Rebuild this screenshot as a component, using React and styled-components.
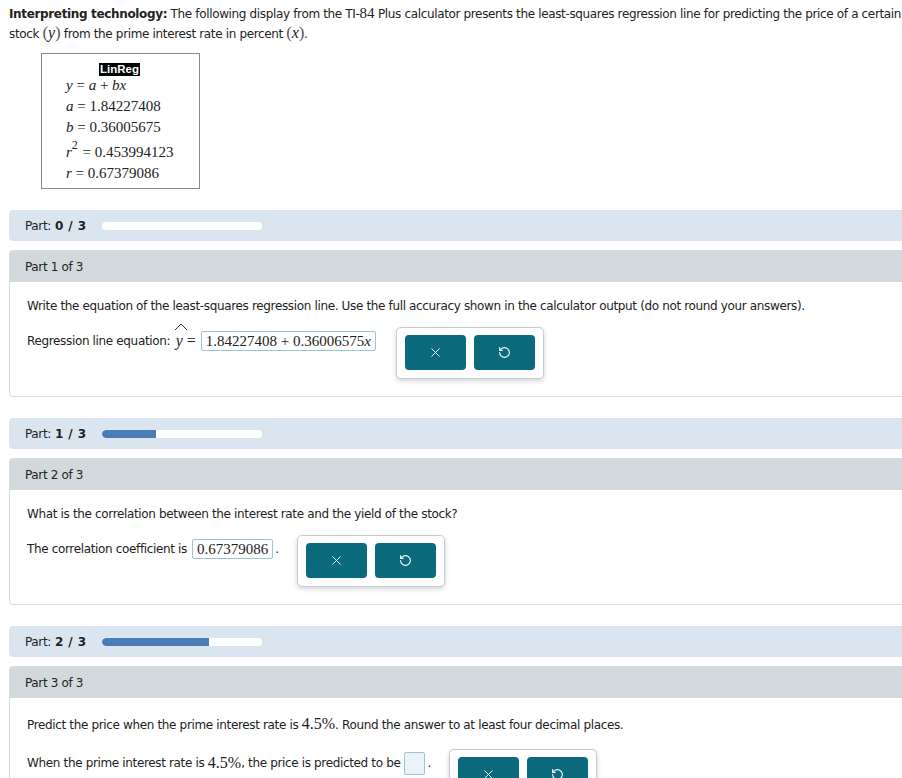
import React from "react";
import styled, { createGlobalStyle } from "styled-components";
import { X, RotateCcw } from "lucide-react";

const Global = createGlobalStyle`
  html, body { margin: 0; padding: 0; overflow: hidden; background: #fff; }
  body { font-family: "DejaVu Sans", Verdana, sans-serif; font-size: 12px; letter-spacing: -0.35px; color: #222; }
`;

const Page = styled.div`
  width: 930px;
  padding: 4px 0 0 9px;
`;

const Intro = styled.p`
  margin: 0;
  line-height: 20px;
  width: 895px;
`;

const M = styled.span`
  font-family: "Liberation Serif", "Times New Roman", serif;
  font-style: ${(p) => (p.$up ? "normal" : "italic")};
  font-size: ${(p) => p.$size || 16}px;
  letter-spacing: 0;
  line-height: 1;
`;

const Paren = styled.span`
  font-family: "Liberation Serif", serif;
  font-size: 17px;
  line-height: 1;
  color: #555;
`;

const CalcBox = styled.div`
  margin: 9px 0 0 32px;
  width: 157px;
  height: 125px;
  border: 1px solid #8a8a8a;
  display: flex;
  flex-direction: column;
  padding-top: 9px;
  letter-spacing: 0;
`;

const LinLabel = styled.div`
  align-self: center;
  background: #000;
  color: #fff;
  font-family: "Liberation Sans", Arial, sans-serif;
  font-weight: bold;
  font-size: 11.5px;
  line-height: 13px;
  padding: 0 1px;
  margin-left: -2px;
`;

const CalcLine = styled.div`
  font-family: "Liberation Serif", "Times New Roman", serif;
  font-size: 15px;
  padding-left: 24px;
  height: ${(p) => p.$h || 21}px;
  display: flex;
  align-items: flex-end;
  white-space: pre;
  i { font-style: italic; }
  sup { font-size: 12px; position: relative; top: -8px; vertical-align: baseline; margin-right: 1px; }
`;

const StatusBar = styled.div`
  margin-top: 21px;
  height: 31px;
  background: #dbe5ef;
  border-radius: 4px 0 0 4px;
  display: flex;
  align-items: center;
  padding-left: 16px;
  b { margin-left: 4px; white-space: pre; letter-spacing: 0.4px; }
`;

const Track = styled.div`
  margin-left: 16px;
  width: 160px;
  height: 8px;
  border-radius: 4px;
  background: #fff;
  overflow: hidden;
`;

const Fill = styled.div`
  height: 100%;
  background: #4a7cb5;
  border-radius: 4px 0 0 4px;
`;

const PartBox = styled.div`
  margin-top: 9px;
  border: 1px solid #d5dbde;
  border-right: none;
  border-radius: 4px 0 0 4px;
  overflow: hidden;
`;

const PartHead = styled.div`
  height: 31px;
  background: #d2d9dc;
  display: flex;
  align-items: center;
  padding-left: 15px;
`;

const PartBody = styled.div`
  padding: ${(p) => 14 + (p.$extra || 0)}px 17px 17px;
`;

const Question = styled.div`
  line-height: 20px;
`;

const AnswerRow = styled.div`
  display: flex;
  align-items: flex-start;
  margin-top: ${(p) => p.$mt || 11}px;
`;

const AnswerText = styled.div`
  display: flex;
  align-items: center;
  margin-top: 4px;
  white-space: pre;
  height: 20px;
`;

const Hat = styled.span`
  display: inline-flex;
  flex-direction: column;
  align-items: center;
  margin: 0 4px 0 2px;
  position: relative;
  svg { position: absolute; top: -10px; left: -2px; }
`;

const Input = styled.span`
  display: inline-flex;
  align-items: center;
  height: ${(p) => (p.$empty ? 21 : 18)}px;
  min-width: ${(p) => (p.$empty ? 19 : 0)}px;
  padding: 0 ${(p) => (p.$empty ? 0 : 4)}px;
  border: 1px solid #9dc4d3;
  border-radius: 2px;
  background: ${(p) => (p.$empty ? "#e9f3f8" : "#fff")};
  font-family: "Liberation Serif", "Times New Roman", serif;
  font-size: 15px;
  letter-spacing: 0;
  color: #222;
  margin-left: ${(p) => p.$ml ?? 4}px;
  margin-right: 2px;
`;

const Group = styled.div`
  margin-left: 18px;
  display: flex;
  gap: 8px;
  padding: 7px 8px 8px;
  border: 1px solid #c7ccd0;
  border-radius: 5px;
  box-shadow: 0 2px 5px rgba(0, 0, 0, 0.18);
  background: #fff;
`;

const Btn = styled.button`
  width: 61px;
  height: 35px;
  border: none;
  border-radius: 4px;
  background: #0b6b7c;
  color: #fff;
  display: flex;
  align-items: center;
  justify-content: center;
  padding: 0;
`;

function Buttons() {
  return (
    <Group>
      <Btn aria-label="clear"><X size={15} strokeWidth={1.5} /></Btn>
      <Btn aria-label="undo"><RotateCcw size={13} strokeWidth={2} /></Btn>
    </Group>
  );
}

function Status({ n }) {
  return (
    <StatusBar>
      Part:<b>{n} / 3</b>
      <Track>
        <Fill style={{ width: `${(n / 3) * 100}%` }} />
      </Track>
    </StatusBar>
  );
}

export default function App() {
  return (
    <Page>
      <Global />
      <Intro>
        <b>Interpreting technology:</b> The following display from the TI-<M $up $size={15}>84</M> Plus calculator presents the least-squares regression line for predicting the price of a certain stock <Paren>(</Paren><M>y</M><Paren>)</Paren> from the prime interest rate in percent <Paren>(</Paren><M>x</M><Paren>)</Paren>.
      </Intro>
      <CalcBox>
        <LinLabel>LinReg</LinLabel>
        <CalcLine $h={18}><i>y</i> = <i>a</i> + <i>bx</i></CalcLine>
        <CalcLine><i>a</i> = 1.84227408</CalcLine>
        <CalcLine><i>b</i> = 0.36005675</CalcLine>
        <CalcLine $h={25}><i>r</i><sup>2</sup> = 0.453994123</CalcLine>
        <CalcLine><i>r</i> = 0.67379086</CalcLine>
      </CalcBox>

      <Status n={0} />
      <PartBox>
        <PartHead>Part 1 of 3</PartHead>
        <PartBody>
          <Question>Write the equation of the least-squares regression line. Use the full accuracy shown in the calculator output (do not round your answers).</Question>
          <AnswerRow>
            <AnswerText>
              Regression line equation: <Hat><svg width="14" height="8" viewBox="0 0 14 8"><path d="M1 7 L7 1 L13 7" fill="none" stroke="#333" strokeWidth="1" /></svg><M>y</M></Hat><M $up>=</M>
              <Input $ml={5}>1.84227408 + 0.36006575<M $size={15}>x</M></Input>
            </AnswerText>
            <Buttons />
          </AnswerRow>
        </PartBody>
      </PartBox>

      <Status n={1} />
      <PartBox>
        <PartHead>Part 2 of 3</PartHead>
        <PartBody>
          <Question>What is the correlation between the interest rate and the yield of the stock?</Question>
          <AnswerRow>
            <AnswerText>
              The correlation coefficient is<Input $ml={5}>0.67379086</Input>.
            </AnswerText>
            <Buttons />
          </AnswerRow>
        </PartBody>
      </PartBox>

      <Status n={2} />
      <PartBox>
        <PartHead>Part 3 of 3</PartHead>
        <PartBody $extra={3}>
          <Question>Predict the price when the prime interest rate is <M $up>4.5%</M>. Round the answer to at least four decimal places.</Question>
          <AnswerRow $mt={14}>
            <AnswerText>
              When the prime interest rate is <M $up>4.5%</M>, the price is predicted to be<Input $empty $ml={4} />.
            </AnswerText>
            <Buttons />
          </AnswerRow>
        </PartBody>
      </PartBox>
    </Page>
  );
}
